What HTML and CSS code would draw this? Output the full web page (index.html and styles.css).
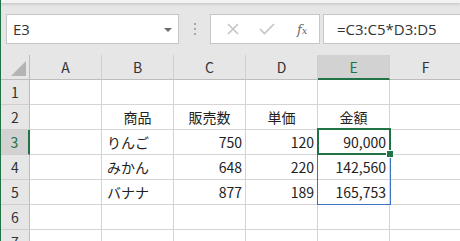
FILE: index.html
```html
<!DOCTYPE html>
<html lang="ja">
<head>
    <meta charset="UTF-8">
    <title>Book1 - Excel</title>
    <link rel="stylesheet" href="styles.css">
</head>
<body>
    <div class="ribbon-edge"></div>

    <div class="formula-bar">
        <div class="name-box">
            <span class="cell-ref">E3</span>
            <span class="drop-arrow"></span>
        </div>
        <div class="grip">
            <span></span><span></span><span></span>
        </div>
        <div class="fx-buttons">
            <svg class="btn-icon" width="12" height="12" viewBox="0 0 12 12">
                <path d="M1 1 L11 11 M11 1 L1 11" stroke="#c4c4c4" stroke-width="1.6" fill="none"/>
            </svg>
            <svg class="btn-icon" width="16" height="12" viewBox="0 0 16 12">
                <path d="M1 6 L5.5 10.5 L15 1" stroke="#c4c4c4" stroke-width="1.6" fill="none"/>
            </svg>
            <span class="fx">f<i>x</i></span>
        </div>
        <div class="formula-box">=C3:C5*D3:D5</div>
    </div>

    <div class="sheet">
        <div class="row head-row">
            <div class="rh corner"><span class="tri"></span></div>
            <div class="ch">A</div>
            <div class="ch">B</div>
            <div class="ch">C</div>
            <div class="ch">D</div>
            <div class="ch active-col">E</div>
            <div class="ch">F</div>
        </div>
        <div class="row">
            <div class="rh">1</div>
            <div class="cell"></div><div class="cell"></div><div class="cell"></div>
            <div class="cell"></div><div class="cell"></div><div class="cell"></div>
        </div>
        <div class="row">
            <div class="rh">2</div>
            <div class="cell"></div>
            <div class="cell center">商品</div>
            <div class="cell center">販売数</div>
            <div class="cell center">単価</div>
            <div class="cell center">金額</div>
            <div class="cell"></div>
        </div>
        <div class="row">
            <div class="rh active-row">3</div>
            <div class="cell"></div>
            <div class="cell">りんご</div>
            <div class="cell num">750</div>
            <div class="cell num">120</div>
            <div class="cell num">90,000</div>
            <div class="cell"></div>
        </div>
        <div class="row">
            <div class="rh">4</div>
            <div class="cell"></div>
            <div class="cell">みかん</div>
            <div class="cell num">648</div>
            <div class="cell num">220</div>
            <div class="cell num">142,560</div>
            <div class="cell"></div>
        </div>
        <div class="row">
            <div class="rh">5</div>
            <div class="cell"></div>
            <div class="cell">バナナ</div>
            <div class="cell num">877</div>
            <div class="cell num">189</div>
            <div class="cell num">165,753</div>
            <div class="cell"></div>
        </div>
        <div class="row">
            <div class="rh">6</div>
            <div class="cell"></div><div class="cell"></div><div class="cell"></div>
            <div class="cell"></div><div class="cell"></div><div class="cell"></div>
        </div>
        <div class="row">
            <div class="rh">7</div>
            <div class="cell"></div><div class="cell"></div><div class="cell"></div>
            <div class="cell"></div><div class="cell"></div><div class="cell"></div>
        </div>

        <!-- selection overlays -->
        <div class="spill-range"></div>
        <div class="active-cell"><span class="fill-handle"></span></div>
    </div>
</body>
</html>
```

FILE: styles.css
```css
html, body {
    margin: 0;
    padding: 0;
    height: 100%;
    overflow: hidden;
}

body {
    background-color: #e6e6e6;
    border-left: 1px solid #217346;
    font-family: "Noto Sans CJK JP", "Noto Sans", sans-serif;
    color: #222222;
}

.ribbon-edge {
    height: 3px;
    background-color: #f3f3f3;
    box-shadow: 0 1px 3px rgba(0, 0, 0, 0.18);
}

.formula-bar {
    height: 52px;
    display: flex;
    align-items: flex-start;
    padding-top: 11px;
    box-sizing: border-box;
}

.name-box {
    margin-left: 5px;
    width: 173px;
    height: 30px;
    box-sizing: border-box;
    background: #ffffff;
    border: 1px solid #c6c6c6;
    display: flex;
    align-items: center;
    justify-content: space-between;
    padding: 0 6px 0 6px;
}

.cell-ref {
    font-family: "Open Sans", "Noto Sans", sans-serif;
    font-size: 15px;
    color: #333333;
}

.drop-arrow {
    width: 0;
    height: 0;
    border-left: 4px solid transparent;
    border-right: 4px solid transparent;
    border-top: 4px solid #6d6d6d;
    margin-top: 1px;
}

.grip {
    width: 31px;
    height: 30px;
    display: flex;
    flex-direction: column;
    align-items: center;
    justify-content: center;
    gap: 3px;
}

.grip span {
    width: 2px;
    height: 2px;
    background: #a8a8a8;
}

.fx-buttons {
    width: 110px;
    height: 30px;
    box-sizing: border-box;
    background: #ffffff;
    border: 1px solid #c6c6c6;
    display: flex;
    align-items: center;
    padding-left: 16px;
    gap: 20px;
}

.fx {
    font-family: "DejaVu Serif", "Liberation Serif", serif;
    font-style: italic;
    font-size: 13px;
    color: #6a6a6a;
    margin-left: 2px;
}

.fx i {
    font-size: 10px;
}

.formula-box {
    margin-left: 3px;
    flex: 1;
    height: 30px;
    box-sizing: border-box;
    background: #ffffff;
    border: 1px solid #c6c6c6;
    border-right: none;
    padding-left: 13px;
    font-family: "Open Sans", "Noto Sans", sans-serif;
    font-size: 15px;
    line-height: 28px;
    color: #333333;
}

.sheet {
    position: relative;
    background: #ffffff;
}

.row {
    display: flex;
    height: 25px;
}

.rh {
    width: 29px;
    flex: none;
    box-sizing: border-box;
    background: #e6e6e6;
    border-right: 1px solid #bdbdbd;
    border-bottom: 1px solid #cfcfcf;
    display: flex;
    align-items: center;
    justify-content: center;
    font-size: 14px;
    color: #333333;
}

.ch {
    width: 72px;
    flex: none;
    box-sizing: border-box;
    background: #e6e6e6;
    border-right: 1px solid #cfcfcf;
    border-bottom: 1px solid #bdbdbd;
    display: flex;
    align-items: center;
    justify-content: center;
    font-size: 14px;
    color: #333333;
}

.corner {
    position: relative;
    border-bottom: 1px solid #bdbdbd;
}

.tri {
    position: absolute;
    right: 3px;
    bottom: 3px;
    width: 0;
    height: 0;
    border-left: 15px solid transparent;
    border-bottom: 15px solid #b4b4b4;
}

.active-col {
    background: #d2d2d2;
    color: #217346;
    border-bottom: 2px solid #217346;
}

.active-row {
    background: #d2d2d2;
    color: #217346;
    border-right: 2px solid #217346;
}

.cell {
    width: 72px;
    flex: none;
    box-sizing: border-box;
    border-right: 1px solid #d4d4d4;
    border-bottom: 1px solid #d4d4d4;
    display: flex;
    align-items: center;
    padding: 0 5px;
    font-size: 14px;
    line-height: 1;
    white-space: nowrap;
}

.cell.center {
    justify-content: center;
}

.cell.num {
    justify-content: flex-end;
    padding-right: 3px;
}

.active-cell {
    position: absolute;
    left: 316px;
    top: 73px;
    width: 74px;
    height: 27px;
    box-sizing: border-box;
    border: 2px solid #217346;
}

.fill-handle {
    position: absolute;
    right: -5px;
    bottom: -5px;
    width: 6px;
    height: 6px;
    background: #217346;
    border: 1px solid #ffffff;
}

.spill-range {
    position: absolute;
    left: 316px;
    top: 99px;
    width: 74px;
    height: 51px;
    box-sizing: border-box;
    border: 1px solid #3c73c4;
}
```
